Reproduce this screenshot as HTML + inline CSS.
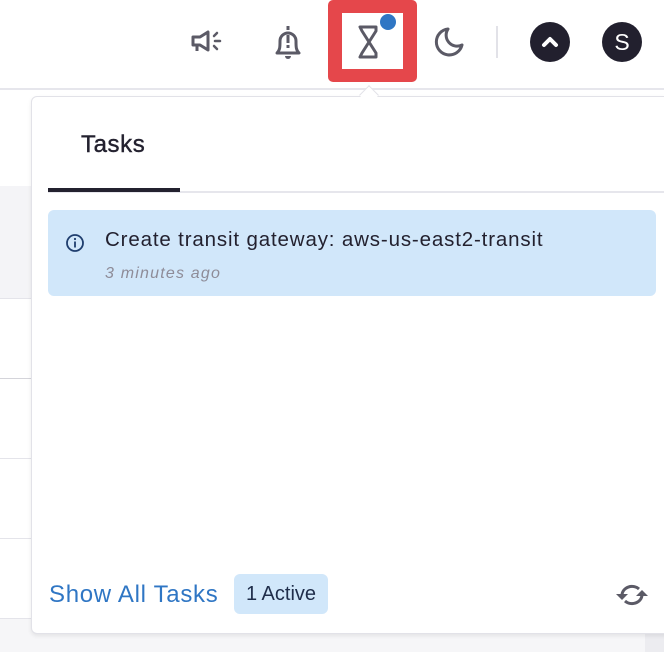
<!DOCTYPE html>
<html><head><style>
*{margin:0;padding:0;box-sizing:border-box}
body{width:664px;height:652px;overflow:hidden;background:#fff;font-family:"Liberation Sans",sans-serif;position:relative}
.ab{position:absolute}
</style></head><body>
<div class="ab" style="left:0;top:88px;width:664px;height:2px;background:#e6e6ec"></div>
<div class="ab" style="left:0;top:186px;width:40px;height:112px;background:#f4f4f7"></div>
<div class="ab" style="left:0;top:298px;width:40px;height:1px;background:#e4e4ea"></div>
<div class="ab" style="left:0;top:378px;width:40px;height:1px;background:#d4d4da"></div>
<div class="ab" style="left:0;top:458px;width:40px;height:1px;background:#e4e4ea"></div>
<div class="ab" style="left:0;top:538px;width:40px;height:1px;background:#e4e4ea"></div>
<div class="ab" style="left:0;top:618px;width:40px;height:1px;background:#e4e4ea"></div>
<div class="ab" style="left:0;top:619px;width:664px;height:33px;background:#f6f6f8"></div>
<div class="ab" style="left:645px;top:634px;width:19px;height:18px;background:#ececf0"></div>

<!-- popup -->
<div class="ab" style="left:31px;top:96px;width:640px;height:538px;background:#fff;border:1px solid #e2e2e8;border-radius:6px;box-shadow:0 2px 4px rgba(0,0,0,.08)"></div>
<div class="ab" style="left:362px;top:88px;width:14px;height:14px;background:#fff;border-left:1px solid #e2e2e8;border-top:1px solid #e2e2e8;transform:rotate(45deg)"></div>
<div class="ab" style="left:81px;top:131px;font-size:24px;color:#23212f;letter-spacing:0.6px;-webkit-text-stroke:0.4px #23212f">Tasks</div>
<div class="ab" style="left:48px;top:191px;width:616px;height:2px;background:#e6e6ec"></div>
<div class="ab" style="left:48px;top:188px;width:132px;height:4px;background:#23212f"></div>
<div class="ab" style="left:48px;top:210px;width:608px;height:86px;background:#d1e7fa;border-radius:6px"></div>
<svg class="ab" style="left:65px;top:233px" width="20" height="20" viewBox="0 0 20 20"><circle cx="10" cy="10" r="8" fill="none" stroke="#1f3e6e" stroke-width="1.8"/><rect x="9.1" y="8.5" width="1.8" height="6" fill="#1f3e6e"/><circle cx="10" cy="6" r="1.1" fill="#1f3e6e"/></svg>
<div class="ab" style="left:105px;top:228px;font-size:20.5px;color:#23212f;letter-spacing:0.85px">Create transit gateway: aws-us-east2-transit</div>
<div class="ab" style="left:105px;top:265px;font-size:16px;color:#8e8c98;font-style:italic;letter-spacing:1.2px">3 minutes ago</div>
<div class="ab" style="left:49px;top:581px;font-size:24px;color:#2f76c4;letter-spacing:0.7px">Show All Tasks</div>
<div class="ab" style="left:234px;top:574px;width:94px;height:40px;background:#d1e7fa;border-radius:6px;font-size:20px;color:#1f2d4a;text-align:center;line-height:40px">1 Active</div>
<svg class="ab" style="left:613px;top:580px" width="38" height="30" viewBox="0 0 38 30"><path d="M9 15a10 9 0 0 1 17-6" fill="none" stroke="#5b5a66" stroke-width="3"/><path d="M29 15a10 9 0 0 1-17 6" fill="none" stroke="#5b5a66" stroke-width="3"/><path d="M3 14h12l-6 6z" fill="#5b5a66"/><path d="M35 16H23l6-6z" fill="#5b5a66"/></svg>

<!-- header icons -->
<svg class="ab" style="left:191px;top:27px" width="36" height="30" viewBox="0 0 36 30"><path d="M2 10h7l8-5v18l-8-5H2z" fill="none" stroke="#5b5a66" stroke-width="3" stroke-linejoin="round"/><path d="M6 18v6" stroke="#5b5a66" stroke-width="3"/><path d="M23 9l3-3M23 19l3 3M24 14h5" stroke="#5b5a66" stroke-width="2.5" stroke-linecap="round"/></svg>
<svg class="ab" style="left:272px;top:24px" width="32" height="38" viewBox="0 0 32 38"><path d="M5 29c3-3 3-6 3-12a8 8 0 0 1 16 0c0 6 0 9 3 12z" fill="none" stroke="#5b5a66" stroke-width="3" stroke-linejoin="round"/><path d="M16 2v4" stroke="#5b5a66" stroke-width="3"/><path d="M13 32a3 3 0 0 0 6 0z" fill="#5b5a66"/><rect x="14.5" y="11" width="3" height="8" fill="#5b5a66"/><rect x="14.5" y="21" width="3" height="3" fill="#5b5a66"/></svg>
<div class="ab" style="left:328px;top:0;width:89px;height:82px;background:#e5474b;border-radius:5px"></div>
<div class="ab" style="left:342px;top:13px;width:61px;height:56px;background:#fff"></div>
<svg class="ab" style="left:356px;top:25px" width="26" height="34" viewBox="0 0 26 34"><path d="M4 2h16v4l-7 11-7-11zM4 32h16v-4l-7-11-7 11z" fill="none" stroke="#5b5a66" stroke-width="3" stroke-linejoin="round"/></svg>
<div class="ab" style="left:380px;top:14px;width:16px;height:16px;border-radius:50%;background:#2f76c4"></div>
<svg class="ab" style="left:431px;top:26px" width="34" height="34" viewBox="0 0 34 34"><path d="M17 3a13 13 0 1 0 14 16A11 11 0 0 1 17 3z" fill="none" stroke="#5b5a66" stroke-width="3" stroke-linejoin="round"/></svg>
<div class="ab" style="left:496px;top:26px;width:2px;height:32px;background:#e2e2e8"></div>
<div class="ab" style="left:530px;top:22px;width:40px;height:40px;border-radius:50%;background:#22202e"></div>
<svg class="ab" style="left:538px;top:30px" width="24" height="24" viewBox="0 0 24 24"><path d="M6 15l6-6 6 6" fill="none" stroke="#fff" stroke-width="4" stroke-linecap="round" stroke-linejoin="round"/></svg>
<div class="ab" style="left:602px;top:22px;width:40px;height:40px;border-radius:50%;background:#22202e;color:#fff;font-size:23px;text-align:center;line-height:40px">S</div>
</body></html>
